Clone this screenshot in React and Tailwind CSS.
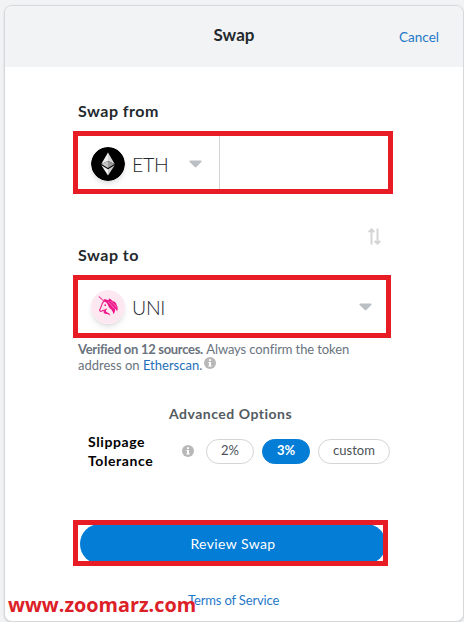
import clsx from 'clsx'

const SLIPPAGE = [
  { label: '2%', width: 'w-12' },
  { label: '3%', width: 'w-12' },
  { label: 'custom', width: 'w-[72px]' },
]

const Caret = () => (
  <svg width="13" height="8" viewBox="0 0 13 8" className="shrink-0 fill-[#bbc0c5]">
    <path d="M1.2 0.5H11.8C12.7 0.5 12.9 1.5 12.3 2.1L7.3 7.1C6.8 7.6 6.2 7.6 5.7 7.1L0.7 2.1C0.1 1.5 0.3 0.5 1.2 0.5Z" />
  </svg>
)

const InfoIcon = () => (
  <svg width="12" height="12" viewBox="0 0 12 12" className="shrink-0">
    <circle cx="6" cy="6" r="6" fill="#b8b8b8" />
    <path d="M5 2.3H7V4H5ZM4.4 5H7V8.5H7.7V9.6H4.3V8.5H5V6H4.4Z" fill="#fff" />
  </svg>
)

const EthLogo = () => (
  <svg width="34" height="34" viewBox="0 0 34 34" className="shrink-0 rounded-full shadow-md">
    <circle cx="17" cy="17" r="17" fill="#000" />
    <path d="M17 5.5L10.3 17L17 14Z" fill="#eee" />
    <path d="M17 5.5L23.7 17L17 14Z" fill="#d4d4d4" />
    <path d="M17 14L10.3 17L17 21Z" fill="#c4c4c4" />
    <path d="M17 14L23.7 17L17 21Z" fill="#999" />
    <path d="M10.3 18.3L17 22.3V28.5Z" fill="#f2f2f2" />
    <path d="M23.7 18.3L17 22.3V28.5Z" fill="#ccc" />
  </svg>
)

const UniLogo = () => (
  <svg width="34" height="34" viewBox="0 0 34 34" className="shrink-0 rounded-full shadow-md">
    <circle cx="17" cy="17" r="17" fill="#fde8f1" />
    {/* horn */}
    <path d="M7.8 6.5L13.5 11.5" stroke="#e8559f" strokeWidth="1.1" />
    {/* face */}
    <path
      d="M14 9.5L12.5 11.8C10.5 13.5 11 15.5 9.5 18L8.6 20.2C9 21.8 10.3 21.8 11.5 20.6C13 20.2 14.5 20.3 15.8 18.8"
      fill="none"
      stroke="#ee2a90"
      strokeWidth="1.2"
    />
    {/* mane */}
    <path
      d="M13.5 9L17.5 10.3L18 8.5C20 9 21 10.2 21.8 11.3C24 11.4 25.3 13 25.6 15C26.8 16.5 27.2 19 26 21.5C25.6 20 25 19.2 24 18.8C24.5 21 23.8 22.8 22.2 24C22.2 21.5 20.8 19.8 19 18.4C17.5 17 17.2 14.3 15.2 12.4L13 11.3Z"
      fill="#ee168b"
    />
    <path d="M17 12C19.5 13.5 21 16 23.6 19M19.5 11.5C22 13 24 15 25.4 17.5" stroke="#fbb6d6" strokeWidth="0.6" fill="none" />
    <circle cx="14.2" cy="15.2" r="0.9" fill="#ee168b" />
    {/* neck */}
    <path
      d="M16.2 18.5C14.3 20.5 14.5 21.8 16.2 22.4C18.2 23 19 24 19.2 26C18 24.4 16.8 24 15.2 24C12.8 23.8 12.3 22.4 12.8 20.8C14 20.4 15 19.7 16.2 18.5Z"
      fill="#ee168b"
    />
  </svg>
)

const SwitchIcon = () => (
  <svg width="13" height="17" viewBox="0 0 13 17" fill="none" stroke="#d5d5d5" strokeWidth="2">
    <path d="M3.5 16.5V2M0.6 4L3.5 1.4L6.4 4M9.5 0.5V15M6.6 13L9.5 15.6L12.4 13" />
  </svg>
)

export default function App() {
  return (
    <div className="relative h-[622px] w-[464px] overflow-hidden bg-[#f2f3f4] pt-[5px] pl-[4px] font-['Lato',sans-serif] text-[#24292e]">
      <div className="h-[617px] w-[460px] overflow-hidden rounded-lg border border-[#d6d9dc] bg-white shadow">
        <header className="grid h-[61px] grid-cols-3 items-center bg-[#f2f3f4] px-6">
          <span />
          <h1 className="pb-1 text-center text-[17px] font-bold">Swap</h1>
          <a className="pt-px text-right text-[13.5px] text-[#1f78c8]">Cancel</a>
        </header>

        <main className="flex flex-col pl-[68px]">
          <h2 className="mt-[33px] h-[31px] pl-[5px] text-[16px] leading-[22px] font-bold tracking-[0.5px]">Swap from</h2>
          <div className="flex h-[63px] w-[320px] border-5 border-[#e81c24]">
            <div className="flex w-[142px] items-center border-r border-[#d2d4d6] pt-[2px] pl-[13px]">
              <EthLogo />
              <span className="ml-[7px] w-[57px] pt-[2px] text-[19.5px] font-light tracking-[-0.3px]">ETH</span>
              <Caret />
            </div>
          </div>

          <div className="mt-[34px] flex h-[17px] w-[308px] justify-end">
            <SwitchIcon />
          </div>

          <h2 className="-mt-px h-[31px] pl-[5px] text-[16px] leading-[22px] font-bold tracking-[0.5px]">Swap to</h2>
          <div className="flex h-[63px] w-[318px] items-center border-5 border-[#e81c24] pt-px pr-[14px] pl-[13px]">
            <UniLogo />
            <span className="ml-[7px] flex-1 pt-[2px] text-[19.5px] font-light tracking-[-0.3px]">UNI</span>
            <Caret />
          </div>

          <div className="mt-[3px] pl-[5px] text-[13px] leading-4 whitespace-nowrap text-[#6a737d]">
            <p><b className="tracking-[-0.3px]">Verified on 12 sources.</b> <span className="tracking-[-0.1px]">Always confirm the token</span></p>
            <p className="flex">
              address on&nbsp;<a className="text-[#1f70b8]">Etherscan</a>.
              <span className="ml-[2px]"><InfoIcon /></span>
            </p>
          </div>

          <h3 className="mt-[31px] pl-[96px] text-[14px] leading-5 font-bold tracking-[0.5px] text-[#535a61]">Advanced Options</h3>
          <div className="mt-[7px] flex h-[40px] items-center pl-[15px]">
            <div className="w-[94px] text-[14px] leading-[19px] font-bold tracking-[0.6px] text-black">
              Slippage<br />Tolerance
            </div>
            <InfoIcon />
            <div className="ml-3 flex gap-2">
              {SLIPPAGE.map(({ label, width }) => (
                <button
                  key={label}
                  className={clsx(
                    'h-[25px] rounded-full border text-[13px]',
                    width,
                    label === '3%' ? 'border-[#037dd6] bg-[#037dd6] font-bold text-white' : 'border-[#d2d5d8] text-[#4b5158]'
                  )}
                >
                  {label}
                </button>
              ))}
            </div>
          </div>

          <div className="mt-[49px] h-[46px] w-[315px] overflow-hidden border-5 border-[#e81c24]">
            <button className="-mt-px ml-[2px] h-10 w-[306px] rounded-full bg-[#037dd6] pb-[2px] text-[14px] tracking-[0.4px] text-white">
              Review Swap
            </button>
          </div>
          <a className="mt-[26px] pl-[115px] text-[13px] leading-4 tracking-[-0.15px] text-[#1f78c8]">Terms of Service</a>
        </main>
      </div>
      <div className="absolute top-[591px] left-[8px] font-['Open_Sans',sans-serif] text-[19.8px] leading-7 font-bold text-[#dc2027]">
        www.zoomarz.com
      </div>
    </div>
  )
}
